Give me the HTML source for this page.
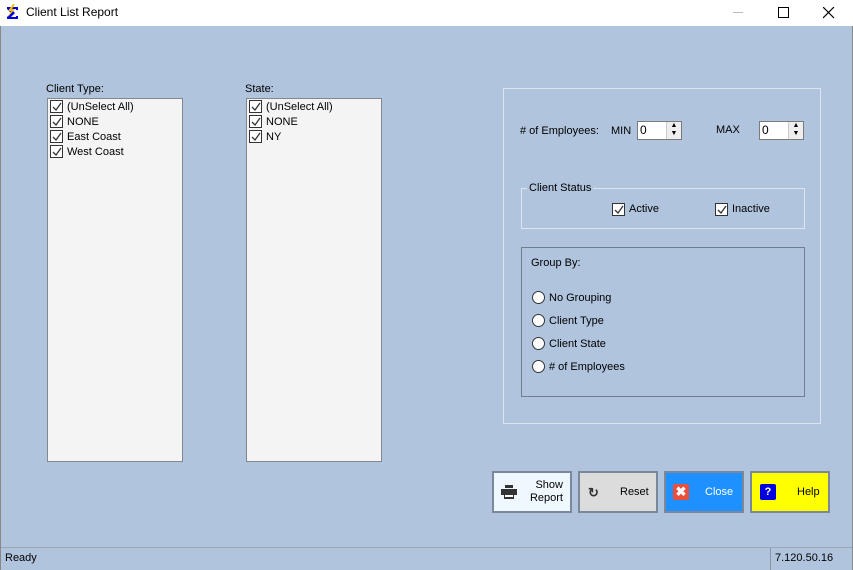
<!DOCTYPE html><html><head><style>
*{box-sizing:border-box;margin:0;padding:0}
body{width:853px;height:570px;position:relative;overflow:hidden;background:#b0c4de;font-family:"Liberation Sans",sans-serif;font-size:11px;color:#000}
.a{position:absolute;line-height:15px}
.cb{position:absolute;width:13px;height:13px;border:1px solid #333;background:#fff}
.cb svg{position:absolute;left:1px;top:1px}
.list{position:absolute;background:#f4f4f4;border:1px solid #828790}
.rb{position:absolute;width:13px;height:13px;border:1px solid #333;border-radius:50%;background:#fff}
.btn{position:absolute;top:471px;height:42px;border:2px solid #7a8899}
</style></head><body>
<div class="a" style="left:0;top:0;width:853px;height:26px;background:#fff"></div>
<svg class="a" style="left:4px;top:4px" width="18" height="18" viewBox="0 0 18 18"><path d="M3 3h11v3h-2V5H7l4 4-4 4h5v-1h2v3H3v-2l4-4-4-4z" fill="#0000e0"/><path d="M9 0l-5 7h3l-3 6 7-8H8l3-5z" fill="#f0c000"/></svg>
<div class="a" style="left:26px;top:5px;font-size:12px">Client List Report</div>
<div class="a" style="left:733px;top:12px;width:10px;height:1px;background:#bbb"></div>
<div class="a" style="left:778px;top:7px;width:11px;height:11px;border:1px solid #000"></div>
<svg class="a" style="left:823px;top:7px" width="12" height="12"><path d="M0 0L11 11M11 0L0 11" stroke="#000" stroke-width="1.2"/></svg>
<div class="a" style="left:0;top:26px;width:1px;height:544px;background:#888"></div>
<div class="a" style="left:852px;top:26px;width:1px;height:544px;background:#888"></div>

<div class="a" style="left:46px;top:82px">Client Type:</div>
<div class="list" style="left:47px;top:98px;width:136px;height:364px"></div>
<div class="a" style="left:245px;top:82px">State:</div>
<div class="list" style="left:246px;top:98px;width:136px;height:364px"></div>

<div class="a" style="left:503px;top:88px;width:318px;height:336px;border:1px solid #dde4ee"></div>
<div class="a" style="left:520px;top:124px">#&nbsp;of Employees:</div>
<div class="a" style="left:611px;top:124px">MIN</div>
<div class="a" style="left:637px;top:121px;width:45px;height:19px;background:#fff;border:1px solid #7a7a7a;padding:1px 2px;font-size:12px">0</div>
<div class="a" style="left:716px;top:123px">MAX</div>
<div class="a" style="left:759px;top:121px;width:45px;height:19px;background:#fff;border:1px solid #7a7a7a;padding:1px 2px;font-size:12px">0</div>
<div class="a" style="left:666px;top:122px;width:15px;height:17px;background:#eee;border-left:1px solid #ccc;font-size:7px;line-height:8px;text-align:center">▲<br>▼</div>
<div class="a" style="left:788px;top:122px;width:15px;height:17px;background:#eee;border-left:1px solid #ccc;font-size:7px;line-height:8px;text-align:center">▲<br>▼</div>

<div class="a" style="left:521px;top:188px;width:284px;height:41px;border:1px solid #dde4ee"></div>
<div class="a" style="left:527px;top:181px;background:#b0c4de;padding:0 2px">Client Status</div>
<div class="a" style="left:629px;top:202px">Active</div>
<div class="a" style="left:732px;top:202px">Inactive</div>

<div class="a" style="left:521px;top:247px;width:284px;height:150px;border:1px solid #6f7f90"></div>
<div class="a" style="left:531px;top:256px">Group By:</div>
<div class="rb" style="left:532px;top:291px"></div><div class="a" style="left:549px;top:291px">No Grouping</div>
<div class="rb" style="left:532px;top:314px"></div><div class="a" style="left:549px;top:314px">Client Type</div>
<div class="rb" style="left:532px;top:337px"></div><div class="a" style="left:549px;top:337px">Client State</div>
<div class="rb" style="left:532px;top:360px"></div><div class="a" style="left:549px;top:360px"># of Employees</div>

<div class="btn" style="left:492px;width:80px;background:#f0f8ff"></div>
<svg class="a" style="left:501px;top:485px" width="16" height="14"><rect x="4" y="0" width="8" height="3" fill="#333"/><rect x="0" y="4" width="16" height="6" fill="#333"/><rect x="3" y="9" width="10" height="5" fill="#333"/><rect x="4" y="10" width="8" height="2" fill="#fff"/></svg>
<div class="a" style="left:528px;top:479px;width:35px;text-align:right;line-height:13px">Show<br>Report</div>
<div class="btn" style="left:578px;width:80px;background:#dcdcdc"></div>
<div class="a" style="left:588px;top:485px;font-size:13px;font-weight:bold;color:#333">↻</div>
<div class="a" style="left:620px;top:485px">Reset</div>
<div class="btn" style="left:664px;width:80px;background:#1e90ff"></div>
<div class="a" style="left:673px;top:484px;width:16px;height:16px;background:#e8503c;border-radius:2px;color:#fff;font-weight:bold;text-align:center;line-height:16px;font-size:13px">✖</div>
<div class="a" style="left:705px;top:485px;color:#fff">Close</div>
<div class="btn" style="left:750px;width:80px;background:#ffff00"></div>
<div class="a" style="left:760px;top:484px;width:16px;height:16px;background:#0000e0;border-radius:2px;color:#fff;font-weight:bold;text-align:center;line-height:16px">?</div>
<div class="a" style="left:797px;top:485px">Help</div>

<div class="a" style="left:1px;top:547px;width:851px;height:1px;background:#9aa6b4"></div>
<div class="a" style="left:5px;top:551px">Ready</div>
<div class="a" style="left:770px;top:548px;width:1px;height:22px;background:#8a96a4"></div>
<div class="a" style="left:775px;top:551px">7.120.50.16</div>

<div id="cbs"></div>
<script>
var p=[[50,100],[50,115],[50,130],[50,145],[249,100],[249,115],[249,130],[612,203],[715,203]];
var t=[[67,100,"(UnSelect All)"],[67,115,"NONE"],[67,130,"East Coast"],[67,145,"West Coast"],[266,100,"(UnSelect All)"],[266,115,"NONE"],[266,130,"NY"]];
var h="";p.forEach(function(q){h+='<div class="cb" style="left:'+q[0]+'px;top:'+q[1]+'px"><svg width="10" height="10"><path d="M1 5l3 3 5-7" stroke="#333" stroke-width="1.3" fill="none"/></svg></div>'});
t.forEach(function(q){h+='<div class="a" style="left:'+q[0]+'px;top:'+q[1]+'px">'+q[2]+'</div>'});
document.getElementById("cbs").innerHTML=h;
</script>
</body></html>
